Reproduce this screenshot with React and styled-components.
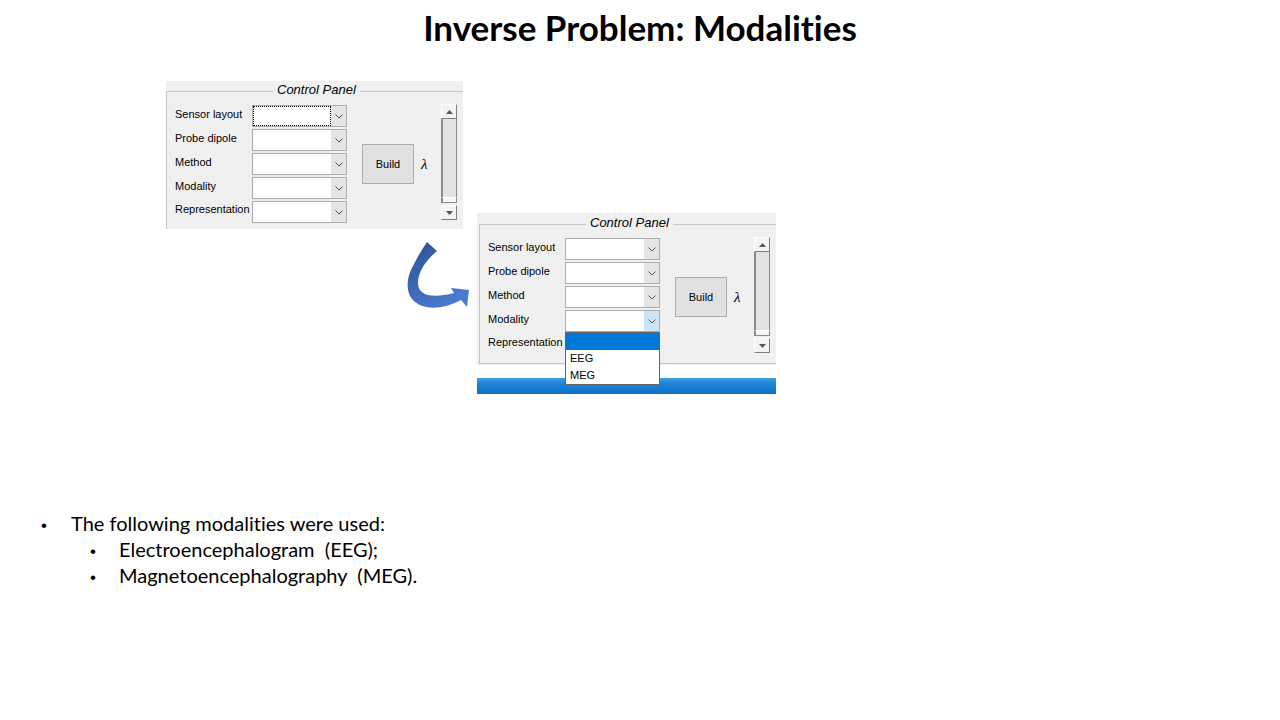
import React from 'react';
import styled, { createGlobalStyle } from 'styled-components';

const GlobalStyle = createGlobalStyle`
  html, body {
    margin: 0;
    padding: 0;
    background: #fff;
  }
  body {
    width: 1280px;
    height: 720px;
    overflow: hidden;
    font-family: Lato, "Liberation Sans", sans-serif;
  }
`;

// Slide
const Slide = styled.div`
  width: 1280px;
  height: 720px;
  background: #fff;
  display: flex;
  flex-direction: column;
`;

const Title = styled.h1`
  margin: 7px 0 0;
  height: 41px;
  font: 700 35px/41px Lato, "Liberation Sans", sans-serif;
  font-variant-ligatures: none;
  font-feature-settings: "liga" 0, "clig" 0, "dlig" 0;
  text-align: center;
  color: #000;
`;

const Figure = styled.div`
  position: relative;
  height: 400px;
  flex: none;
`;

// Screenshot pieces placed on the slide canvas
const Shot = styled.div`
  position: absolute;
  left: ${p => p.$x}px;
  top: ${p => p.$y}px;
  width: ${p => p.$w}px;
  height: ${p => p.$h}px;
  overflow: hidden;
  background: #fff;
  display: flex;
  flex-direction: column;
`;

const Window = styled.div`
  flex: none;
  height: 152px;
  box-sizing: border-box;
  padding: ${p => p.$top}px 0 0 ${p => p.$inset}px;
  background: #f0f0f0;
  font-family: "Liberation Sans", Arial, sans-serif;
`;

const Taskbar = styled.div`
  flex: none;
  margin-top: 13px;
  height: 16px;
  background: linear-gradient(180deg, #3d9ee6 0%, #1f84d6 35%, #0c70c6 100%);
`;

const Group = styled.div`
  position: relative;
  width: 330px;
  height: 140px;
  box-sizing: border-box;
  border: 1px solid #c6c6c6;
  padding: 13px 0 0 8px;
  display: flex;
  align-items: flex-start;
`;

const Legend = styled.span`
  position: absolute;
  top: -10px;
  left: 106px;
  padding: 0 4px;
  background: #f0f0f0;
  font: italic 13px/16px "Liberation Sans", Arial, sans-serif;
  color: #000;
`;

const Form = styled.div`
  display: grid;
  grid-template-columns: 77px 95px;
  grid-auto-rows: 22px;
  row-gap: 2px;
`;

const Label = styled.div`
  align-self: center;
  padding-bottom: ${p => p.$lift || 3}px;
  font-size: 11px;
  line-height: 13px;
  color: #000;
  white-space: nowrap;
`;

const Combo = styled.div`
  position: relative;
  display: flex;
  height: 22px;
  box-sizing: border-box;
  border: 1px solid #adadad;
  background: #fff;
`;

const ComboText = styled.div`
  flex: 1;
  box-sizing: border-box;
  border: 1px ${p => (p.$focus ? 'dotted #000' : 'solid transparent')};
`;

const ComboArrow = styled.div`
  width: 15px;
  display: flex;
  align-items: center;
  justify-content: center;
  background: ${p => (p.$hot ? '#cce4f7' : '#e5e5e5')};
`;

const DropList = styled.ul`
  position: absolute;
  top: calc(100% + 1px);
  left: -1px;
  width: 95px;
  margin: 0;
  padding: 0;
  list-style: none;
  box-sizing: border-box;
  border: 1px solid #646464;
  background: #fff;
  z-index: 2;
`;

const DropItem = styled.li`
  height: 17px;
  padding-left: 4px;
  font-size: 11px;
  line-height: 17px;
  color: ${p => (p.$selected ? '#fff' : '#000')};
  background: ${p => (p.$selected ? '#0078d7' : '#fff')};
`;

const BuildButton = styled.button`
  margin: 39px 0 0 15px;
  width: 52px;
  height: 40px;
  padding: 0;
  background: #e1e1e1;
  border: 1px solid #adadad;
  font: 11px "Liberation Sans", Arial, sans-serif;
  color: #000;
`;

const Lambda = styled.div`
  width: 27px;
  box-sizing: border-box;
  padding-left: 7px;
  margin-top: 51px;
  font: italic 15px/16px "Liberation Serif", "DejaVu Serif", serif;
  color: #000;
`;

const ScrollBar = styled.div`
  margin-top: -1px;
  width: 16px;
  height: 116px;
  display: flex;
  flex-direction: column;
`;

const ScrollButton = styled.div`
  flex: none;
  height: 15px;
  box-sizing: border-box;
  margin-top: ${p => p.$gap || 0}px;
  background: #f3f3f3;
  border: 1px solid;
  border-color: #fff #7f7f7f #7f7f7f #fff;
  display: flex;
  align-items: center;
  justify-content: center;
`;

const Thumb = styled.div`
  flex: 1;
  background: #e3e3e3;
  border-left: 2px solid #8a8a8a;
  border-right: 1px solid #8a8a8a;
`;

const TrackRest = styled.div`
  flex: none;
  height: 6px;
  box-sizing: border-box;
  background: #f6f6f6;
  border: 1px solid #8a8a8a;
  border-left-width: 2px;
  border-top-color: #fff;
`;

const ArrowArt = styled.svg`
  position: absolute;
  left: 400px;
  top: 192px;
`;

// Bullets
const Bullets = styled.ul`
  margin: 62px 0 0;
  padding: 0;
  list-style: none;
  font: 20px/26px Lato, "Liberation Sans", sans-serif;
  font-variant-ligatures: none;
  font-feature-settings: "liga" 0, "clig" 0, "dlig" 0;
  color: #000;
`;

const Item = styled.li`
  display: flex;
  align-items: baseline;
  padding-left: ${p => (p.$level === 2 ? 90 : 41)}px;
  white-space: pre;
`;

const Dot = styled.span`
  width: ${p => (p.$level === 2 ? 29 : 30)}px;
  flex: none;
  font: 17px "Liberation Sans", Arial, sans-serif;
`;

const Chevron = () => (
  <svg width="8" height="5" viewBox="0 0 8 5">
    <path d="M0.5 0.5 L4 4 L7.5 0.5" fill="none" stroke="#5a5a5a" strokeWidth="1" />
  </svg>
);

const Tri = ({ down }) => (
  <svg width="7" height="4" viewBox="0 0 7 4">
    <path d={down ? 'M0 0 L7 0 L3.5 4 Z' : 'M0 4 L7 4 L3.5 0 Z'} fill="#555" />
  </svg>
);

const fields = [
  { label: 'Sensor layout' },
  { label: 'Probe dipole' },
  { label: 'Method', lift: 4 },
  { label: 'Modality', lift: 3 },
  { label: 'Representation', lift: 5 },
];

const ControlPanel = ({ inset, top, focusFirst, openModality }) => (
  <Window $inset={inset} $top={top}>
    <Group>
      <Legend>Control Panel</Legend>
      <Form>
        {fields.map((f, i) => {
          const open = openModality && f.label === 'Modality';
          return (
            <React.Fragment key={f.label}>
              <Label $lift={f.lift}>{f.label}</Label>
              <Combo>
                <ComboText $focus={focusFirst && i === 0} />
                <ComboArrow $hot={open}>
                  <Chevron />
                </ComboArrow>
                {open && (
                  <DropList>
                    <DropItem $selected>&nbsp;</DropItem>
                    <DropItem>EEG</DropItem>
                    <DropItem>MEG</DropItem>
                  </DropList>
                )}
              </Combo>
            </React.Fragment>
          );
        })}
      </Form>
      <BuildButton>Build</BuildButton>
      <Lambda>λ</Lambda>
      <ScrollBar>
        <ScrollButton>
          <Tri />
        </ScrollButton>
        <Thumb />
        <TrackRest />
        <ScrollButton $gap={2}>
          <Tri down />
        </ScrollButton>
      </ScrollBar>
    </Group>
  </Window>
);

const CurvedArrow = () => (
  <ArrowArt width="75" height="75" viewBox="0 0 75 75">
    <defs>
      <linearGradient id="arrowFill" x1="0" y1="0" x2="0.6" y2="1">
        <stop offset="0" stopColor="#2c5192" />
        <stop offset="1" stopColor="#4a7bd0" />
      </linearGradient>
    </defs>
    <path
      d="M27 2 L37 11 C26 20 18 32 18 43 C18 55 31 59 54 53 L51 48 L69 50 L67 67 L61 60 C44 69 25 71 14 61 C5 53 6 37 14 24 C18 16 23 8 27 2 Z"
      fill="url(#arrowFill)"
    />
  </ArrowArt>
);

const App = () => (
  <Slide>
    <GlobalStyle />
    <Title>Inverse Problem: Modalities</Title>
    <Figure>
      <Shot $x={166} $y={33} $w={297} $h={148}>
        <ControlPanel inset={0} top={10} focusFirst />
      </Shot>
      <CurvedArrow />
      <Shot $x={477} $y={165} $w={299} $h={181}>
        <ControlPanel inset={2} top={11} openModality />
        <Taskbar />
      </Shot>
    </Figure>
    <Bullets>
      <Item $level={1}>
        <Dot $level={1}>•</Dot>The following modalities were used:
      </Item>
      <Item $level={2}>
        <Dot $level={2}>•</Dot>Electroencephalogram  (EEG);
      </Item>
      <Item $level={2}>
        <Dot $level={2}>•</Dot>Magnetoencephalography  (MEG).
      </Item>
    </Bullets>
  </Slide>
);

export default App;
